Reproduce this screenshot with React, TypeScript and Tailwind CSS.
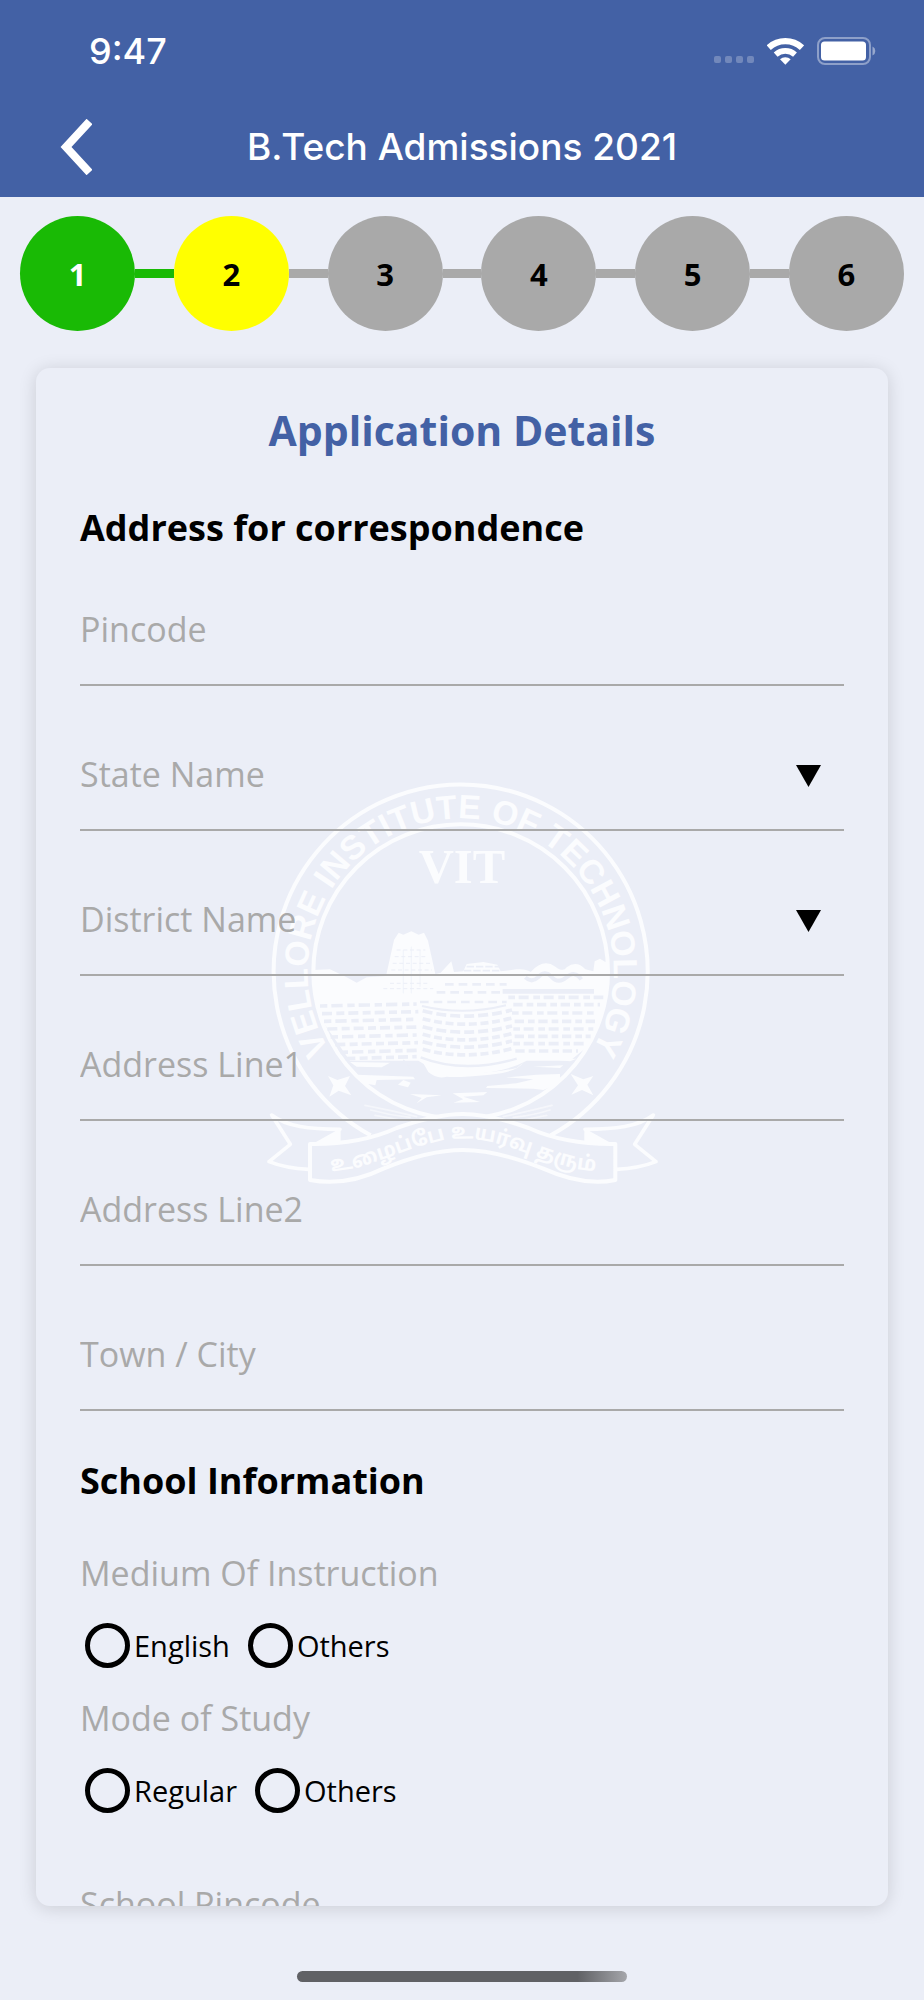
import { useState } from "react";

const steps = [
  { n: 1, circle: "bg-[#19ba05] text-white", line: "bg-[#19ba05]" },
  { n: 2, circle: "bg-[#ffff00] text-black", line: "bg-[#a9a9a9]" },
  { n: 3, circle: "bg-[#a9a9a9] text-black", line: "bg-[#a9a9a9]" },
  { n: 4, circle: "bg-[#a9a9a9] text-black", line: "bg-[#a9a9a9]" },
  { n: 5, circle: "bg-[#a9a9a9] text-black", line: "bg-[#a9a9a9]" },
  { n: 6, circle: "bg-[#a9a9a9] text-black", line: "" },
];

function StatusBar() {
  return (
    <div className="flex h-[101px] items-center justify-between pr-12 pl-[89px]">
      <span className="text-[36px] leading-10 font-medium">9:47</span>
      <div className="flex items-center gap-[13px]">
        <div className="flex gap-1 pt-[18px]">
          {[0, 1, 2, 3].map((i) => (
            <span key={i} className="size-[7px] rounded-[2px] bg-white/25" />
          ))}
        </div>
        <svg width="37" height="28" viewBox="0 0 111 84" aria-hidden="true" fill="none">
          <path d="M5 32 A74 74 0 0 1 105 32" stroke="#fff" strokeWidth="19" />
          <path d="M26 53 A43 43 0 0 1 84 53" stroke="#fff" strokeWidth="17" />
          <path d="M55 83 L39 67 A23 23 0 0 1 71 67 Z" fill="#fff" />
        </svg>
        <svg width="59" height="28" viewBox="0 0 59 28" aria-hidden="true">
          <rect x="1" y="1" width="52" height="26" rx="7" fill="none" stroke="#fff" strokeOpacity=".4" strokeWidth="2" />
          <rect x="4" y="4.500" width="45" height="19" rx="3.500" fill="#fff" />
          <path d="M55.500 9.500 a5 5 0 0 1 0 9 Z" fill="#fff" fillOpacity=".45" />
        </svg>
      </div>
    </div>
  );
}

function Header() {
  return (
    <header className="shrink-0 bg-[#4361a5] font-['Inter',sans-serif] text-white">
      <StatusBar />
      <div className="grid h-24 grid-cols-[1fr_auto_1fr] items-center pb-1">
        <button type="button" aria-label="Back" className="ml-[60px] w-8">
          <svg width="32" height="56" viewBox="0 0 32 56" fill="none" aria-hidden="true">
            <path d="M29.500 2.500 L6 28 L29.500 53.500" stroke="#fff" strokeWidth="8" />
          </svg>
        </button>
        <h1 className="text-[37px] leading-11 font-medium">B.Tech Admissions 2021</h1>
      </div>
    </header>
  );
}

function Stepper() {
  return (
    <ol className="flex shrink-0 items-center px-5 pt-[19px] pb-[37px]">
      {steps.map((s, i) => (
        <li key={s.n} className={i < steps.length - 1 ? "flex flex-1 items-center" : "flex items-center"}>
          <span className={`flex size-[115px] shrink-0 items-center justify-center rounded-full pt-0.5 text-[31px] font-bold ${s.circle}`}>
            {s.n}
          </span>
          {s.line && <span className={`h-[9px] flex-1 ${s.line}`} />}
        </li>
      ))}
    </ol>
  );
}

const BG = "#ebeef7";
const INK = "#fbfcfe";

const leftRows = [
  [210, 500, 704], [216, 505, 727], [222, 500, 750], [232, 508, 773],
  [242, 500, 797], [256, 504, 820], [272, 500, 843], [286, 500, 862],
];
const rightRows = [
  [775, 1060, 682], [790, 1050, 704], [786, 1035, 729], [794, 1038, 754],
  [790, 1030, 777], [794, 1022, 799], [790, 1008, 821], [796, 984, 843],
];
const bastionRows = [730, 754, 778, 801, 823, 846];

function RibbonTail() {
  return (
    <g fill="none" stroke={INK} strokeWidth="11" strokeLinejoin="round" strokeLinecap="round">
      <path d="M176 1198 C130 1196 90 1188 57 1175 L121 1123 L65 1035 C110 1070 180 1078 270 1078" />
      <path d="M270 1078 L270 1120 L188 1124 Z" fill={INK} strokeWidth="4" />
    </g>
  );
}

function Crest() {
  return (
    <svg
      className="pointer-events-none absolute top-[409px] left-1/2 -translate-x-1/2"
      width="400"
      height="413"
      viewBox="36 21 1200 1239"
      aria-hidden="true"
    >
      <defs>
        <path id="motto-ring" d="M280 899 A459 459 0 1 1 984 899" />
        <path id="motto-ribbon" d="M195 1204 C360 1215 490 1106 640 1106 C790 1106 920 1215 1085 1204" />
        <clipPath id="inner-disc">
          <circle cx="632" cy="605" r="442" />
        </clipPath>
      </defs>

      <path d="M362 1096 A561 561 0 1 1 902 1096" fill="none" stroke={INK} strokeWidth="12" />
      <circle cx="632" cy="605" r="442" fill="none" stroke={INK} strokeWidth="12" />
      <text fill={INK} fontFamily="Liberation Sans, sans-serif" fontWeight="700" fontSize="101" textAnchor="middle">
        <textPath href="#motto-ring" startOffset="50%">VELLORE INSTITUTE OF TECHNOLOGY</textPath>
      </text>
      <text x="636" y="340" fill={INK} fontFamily="Liberation Serif, serif" fontWeight="700" fontSize="146" textAnchor="middle">
        VIT
      </text>

      <g clipPath="url(#inner-disc)">
        <path
          d="M180 600 L240 598 L290 622 L320 638 L350 622 L408 618 L432 510 L446 488 L460 494 L484 484 L506 494 L522 488 L534 512 L556 612 L572 608 L604 574 L612 606 L640 604 L650 582 L700 576 L742 584 L752 604 L800 598 Q828 596 842 606 Q880 564 916 590 Q940 608 950 592 Q980 570 1006 598 L1030 604 L1034 574 L1050 566 L1066 576 L1100 580 L1100 760 L1000 840 L960 872 L830 872 Q760 910 650 912 Q560 908 505 872 L300 872 L180 700 Z"
          fill={INK}
        />
        <g stroke={BG} fill="none">
          <path d="M440 540 H526 M434 560 H532 M428 580 H540 M424 600 H546 M420 640 H540 M400 656 H550" strokeWidth="3" strokeDasharray="12 8" />
          <path d="M460 540 V670 M484 530 V670 M510 540 V650" strokeWidth="2" />
          <path d="M650 590 H748 M642 602 H752" strokeWidth="5" strokeDasharray="22 6" />
          <path d="M826 622 Q845 640 864 622 Q884 600 902 618 Q924 644 950 622 Q974 600 994 628" strokeWidth="12" />
          <path d="M758 664 H1032" strokeWidth="14" />
          <path d="M585 643 H770 M560 667 H750 M510 696 H770" strokeWidth="8" strokeDasharray="26 15" />
          {leftRows.map(([a, b, y], i) => (
            <path key={y} d={`M${a} ${y + 4} L${b} ${y - 2}`} strokeWidth="11" strokeDasharray={i % 2 ? "30 13 24 12" : "22 12 34 14"} />
          ))}
          {rightRows.map(([a, b, y], i) => (
            <path key={y} d={`M${a} ${y} H${b}`} strokeWidth="11" strokeDasharray={i % 2 ? "28 12 20 11" : "20 11 30 14"} />
          ))}
          <path d="M516 708 Q640 738 768 706" strokeWidth="6" />
          {bastionRows.map((y, i) => (
            <path key={y} d={`M518 ${y - 8} Q645 ${y + 26} 786 ${y - 10}`} strokeWidth="11" strokeDasharray={i % 2 ? "24 11" : "30 12"} />
          ))}
          <path d="M512 862 Q640 912 800 866" strokeWidth="7" />
          <path d="M460 870 L500 916" strokeWidth="4" />
        </g>
        <g fill={INK}>
          <path d="M300 876 L420 878 L395 892 L320 890 Z" />
          <path d="M320 914 L490 920 L495 928 L380 930 L376 946 L340 940 Z" />
          <path d="M444 944 L460 930 L482 938 L474 952 Z" />
          <path d="M520 880 Q640 928 800 894 L820 878 Q800 906 720 914 Q620 924 590 920 Q560 928 535 906 Z" />
          <path d="M768 922 L860 914 L930 912 L930 940 L880 960 L850 956 L708 954 L712 948 L800 940 L850 928 Z" />
          <path d="M480 972 L575 976 L530 982 L500 1000 L515 984 Z" />
          <path d="M608 970 L712 966 L700 976 L640 980 L690 996 L610 998 L640 988 Z" />
          <path d="M850 890 L940 886 L930 894 Z M900 868 L980 866 L960 874 Z" />
        </g>
      </g>

      <g fill="none" stroke={INK} strokeWidth="5" strokeLinecap="round" opacity=".6">
        <path d="M345 1006 Q420 1020 500 1040 M362 1020 Q420 1036 480 1042 M375 1036 Q420 1044 450 1050" />
        <path d="M906 1006 Q850 1020 760 1040 M900 1020 Q850 1036 790 1042 M890 1036 Q850 1044 820 1050" />
      </g>
      <path d="M234 918 L262 930 L300 918 L285 948 L304 976 L266 962 L238 980 L250 946 Z" fill={INK} />
      <path d="M962 912 L1000 928 L1030 918 L1012 944 L1030 976 L996 960 L964 974 L984 946 Z" fill={INK} />

      <RibbonTail />
      <g transform="translate(1275 0) scale(-1 1)">
        <RibbonTail />
      </g>
      <path
        d="M180 1122 Q330 1124 440 1074 Q560 1032 638 1032 Q716 1032 836 1074 Q946 1124 1096 1122 L1096 1230 Q1000 1250 880 1196 Q740 1140 638 1140 Q536 1140 400 1196 Q290 1250 180 1230 Z"
        fill={BG}
        stroke={INK}
        strokeWidth="12"
        strokeLinejoin="round"
      />
      <text fill={INK} fontFamily="Noto Sans Tamil, Noto Sans, sans-serif" fontWeight="700" fontSize="62" textAnchor="middle">
        <textPath href="#motto-ribbon" startOffset="50%">உழைப்பே உயர்வு தரும்</textPath>
      </text>
    </svg>
  );
}

const fieldBox =
  "block h-[114px] w-full border-b-2 border-[#a9a9a9] bg-transparent pt-0.5 text-[34px] text-[#a9a9a9] outline-none placeholder:text-[#a9a9a9] placeholder:opacity-100";

function TextField({ label }: { label: string }) {
  return <input type="text" aria-label={label} placeholder={label} className={`${fieldBox} rounded-none`} />;
}

function SelectField({ label }: { label: string }) {
  return (
    <div className="relative">
      <select aria-label={label} defaultValue="" className={`${fieldBox} appearance-none rounded-none`}>
        <option value="">{label}</option>
      </select>
      <svg className="pointer-events-none absolute top-[48px] right-[23px]" width="25" height="22" viewBox="0 0 25 22" aria-hidden="true">
        <path d="M0 0 H25 L12.500 22 Z" />
      </svg>
    </div>
  );
}

function RadioRow({ legend, name, options }: { legend: string; name: string; options: string[] }) {
  const [value, setValue] = useState("");
  return (
    <fieldset>
      <legend className="text-[34px] leading-11 text-[#a9a9a9]">{legend}</legend>
      <div className="mt-7 flex gap-[18px] pl-[5px]">
        {options.map((o) => (
          <label key={o} className="flex h-[45px] items-center gap-1 text-[29px] text-black">
            <input
              type="radio"
              name={name}
              checked={value === o}
              onChange={() => setValue(o)}
              className="size-[45px] appearance-none rounded-full border-[5px] border-black checked:bg-black checked:shadow-[inset_0_0_0_6px_#ebeef7]"
            />
            {o}
          </label>
        ))}
      </div>
    </fieldset>
  );
}

export default function App() {
  return (
    <div className="flex h-screen flex-col bg-[#ebeef7] font-['Open_Sans',sans-serif]">
      <Header />
      <Stepper />
      <main className="relative mx-9 min-h-0 flex-1 overflow-hidden rounded-[14px] bg-[#ebeef7] shadow-[0_2px_18px_rgba(0,0,0,0.14)]">
        <Crest />
        <form className="relative h-full overflow-y-auto px-11 pt-[34px] [scrollbar-width:none]">
          <h2 className="text-center text-[41px] leading-14 font-bold text-[#4361a5]">Application Details</h2>

          <h3 className="mt-[46px] text-[36px] leading-12 font-bold text-black">Address for correspondence</h3>
          <div className="mt-5 flex flex-col gap-[31px]">
            <TextField label="Pincode" />
            <SelectField label="State Name" />
            <SelectField label="District Name" />
            <TextField label="Address Line1" />
            <TextField label="Address Line2" />
            <TextField label="Town / City" />
          </div>

          <h3 className="mt-[46px] text-[36px] leading-12 font-bold text-black">School Information</h3>
          <div className="mt-[46px] flex flex-col gap-7">
            <RadioRow legend="Medium Of Instruction" name="medium" options={["English", "Others"]} />
            <RadioRow legend="Mode of Study" name="mode" options={["Regular", "Others"]} />
          </div>
          <div className="mt-[34px]">
            <TextField label="School Pincode" />
          </div>
        </form>
      </main>
      <footer className="flex h-[94px] shrink-0 items-end justify-center pb-[18px]">
        <div className="h-[11px] w-[330px] rounded-full bg-linear-to-r from-[#606165] from-85% to-[#a5a6ab]" />
      </footer>
    </div>
  );
}
